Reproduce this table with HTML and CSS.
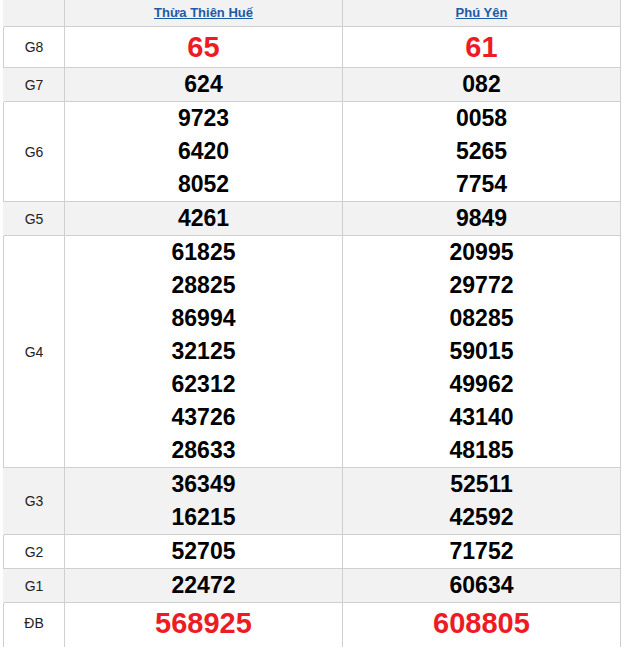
FILE: index.html
```html
<!DOCTYPE html>
<html lang="vi">
<head>
<meta charset="utf-8">
<title>Kết quả xổ số</title>
<link rel="stylesheet" href="styles.css">
</head>
<body>
<div class="results">
  <div class="row head">
    <div class="cell label"></div>
    <div class="cell"><a href="#" class="prov">Thừa Thiên Huế</a></div>
    <div class="cell"><a href="#" class="prov">Phú Yên</a></div>
  </div>
  <div class="row big">
    <div class="cell label">G8</div>
    <div class="cell"><span class="num red">65</span></div>
    <div class="cell"><span class="num red">61</span></div>
  </div>
  <div class="row alt">
    <div class="cell label">G7</div>
    <div class="cell"><span class="num">624</span></div>
    <div class="cell"><span class="num">082</span></div>
  </div>
  <div class="row">
    <div class="cell label">G6</div>
    <div class="cell"><span class="num">9723</span><span class="num">6420</span><span class="num">8052</span></div>
    <div class="cell"><span class="num">0058</span><span class="num">5265</span><span class="num">7754</span></div>
  </div>
  <div class="row alt">
    <div class="cell label">G5</div>
    <div class="cell"><span class="num">4261</span></div>
    <div class="cell"><span class="num">9849</span></div>
  </div>
  <div class="row">
    <div class="cell label">G4</div>
    <div class="cell"><span class="num">61825</span><span class="num">28825</span><span class="num">86994</span><span class="num">32125</span><span class="num">62312</span><span class="num">43726</span><span class="num">28633</span></div>
    <div class="cell"><span class="num">20995</span><span class="num">29772</span><span class="num">08285</span><span class="num">59015</span><span class="num">49962</span><span class="num">43140</span><span class="num">48185</span></div>
  </div>
  <div class="row alt">
    <div class="cell label">G3</div>
    <div class="cell"><span class="num">36349</span><span class="num">16215</span></div>
    <div class="cell"><span class="num">52511</span><span class="num">42592</span></div>
  </div>
  <div class="row">
    <div class="cell label">G2</div>
    <div class="cell"><span class="num">52705</span></div>
    <div class="cell"><span class="num">71752</span></div>
  </div>
  <div class="row alt">
    <div class="cell label">G1</div>
    <div class="cell"><span class="num">22472</span></div>
    <div class="cell"><span class="num">60634</span></div>
  </div>
  <div class="row big last">
    <div class="cell label">ĐB</div>
    <div class="cell"><span class="num red">568925</span></div>
    <div class="cell"><span class="num red">608805</span></div>
  </div>
</div>
</body>
</html>
```

FILE: styles.css
```css
html, body {
  margin: 0;
  padding: 0;
  background: #fff;
}
body {
  padding: 0 3px;
  font-family: "Liberation Sans", Arial, sans-serif;
}
.results {
  width: 618px;
  margin-top: -1px;
  border-top: 1px solid #cfcfcf;
  border-left: 1px solid #cfcfcf;
  box-sizing: border-box;
}
.row {
  display: grid;
  grid-template-columns: 61px 278px 278px;
  margin-left: -1px;
  padding-left: 1px;
}
.row.alt, .row.head {
  background: #f2f2f2;
}
.cell {
  box-sizing: border-box;
  border-right: 1px solid #cfcfcf;
  border-bottom: 1px solid #cfcfcf;
  display: flex;
  flex-direction: column;
  align-items: center;
  justify-content: center;
  text-align: center;
}
.label {
  font-size: 14px;
  color: #222;
}
.head .cell {
  height: 27px;
}
.prov {
  font-size: 13px;
  font-weight: bold;
  color: #1d5ba6;
  text-decoration: underline;
  line-height: 26px;
}
.num {
  display: block;
  font-size: 23px;
  font-weight: bold;
  color: #000;
  line-height: 33px;
}
.num.red {
  color: #ed1c24;
  font-size: 29px;
  line-height: 40px;
}
.big .cell {
  min-height: 41px;
}
.last .cell {
  min-height: 50px;
  justify-content: flex-start;
}
.last .label {
  padding-top: 12px;
}
```
